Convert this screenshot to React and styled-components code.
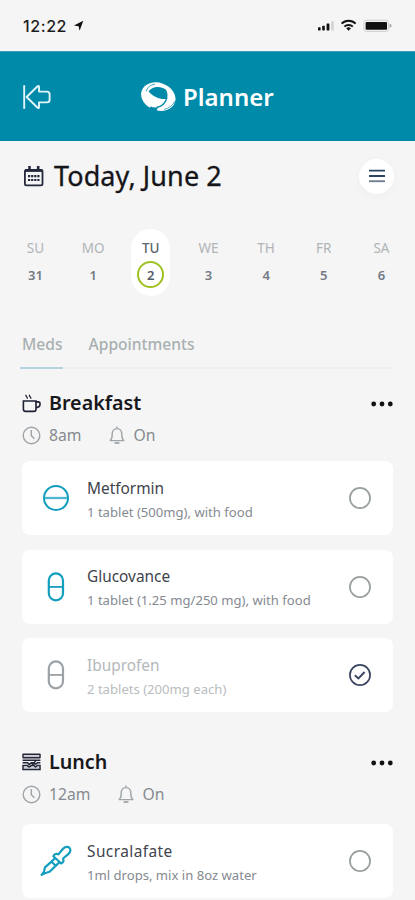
import React from 'react'
import styled, { createGlobalStyle } from 'styled-components'

const week = [
  { day: 'SU', date: '31' },
  { day: 'MO', date: '1' },
  { day: 'TU', date: '2', active: true },
  { day: 'WE', date: '3' },
  { day: 'TH', date: '4' },
  { day: 'FR', date: '5' },
  { day: 'SA', date: '6' },
]

const meals = [
  {
    name: 'Breakfast',
    icon: <CupIcon />,
    time: '8am',
    meds: [
      { name: 'Metformin', dose: '1 tablet (500mg), with food', icon: <TabletIcon /> },
      { name: 'Glucovance', dose: '1 tablet (1.25 mg/250 mg), with food', icon: <CapsuleIcon /> },
      { name: 'Ibuprofen', dose: '2 tablets (200mg each)', icon: <CapsuleIcon />, done: true },
    ],
  },
  {
    name: 'Lunch',
    icon: <SandwichIcon />,
    time: '12am',
    meds: [
      { name: 'Sucralafate', dose: '1ml drops, mix in 8oz water', icon: <DropperIcon />, wide: true },
    ],
  },
]

function App() {
  return (
    <Screen>
      <GlobalStyle />
      <StatusBar>
        <Clock>12:22</Clock>
        <LocationIcon />
        <StatusIcons />
      </StatusBar>

      <Header>
        <BackIcon />
        <Brand>
          <Logo />
          <h1>Planner</h1>
        </Brand>
      </Header>

      <TitleRow>
        <CalendarIcon />
        <h2>Today, June 2</h2>
        <MenuButton aria-label="Menu">
          <svg width="16" height="14" viewBox="0 0 16 14" fill="none" strokeWidth="1.9">
            <path d="M0 1.6h16M0 7h16" stroke="#2b4560" />
            <path d="M0 12.2h16" stroke="#717f90" />
          </svg>
        </MenuButton>
      </TitleRow>

      <Week>
        {week.map((d) => (
          <Day key={d.day} $active={d.active}>
            <DayName $active={d.active}>{d.day}</DayName>
            <DayDate $active={d.active}>{d.date}</DayDate>
          </Day>
        ))}
      </Week>

      <Tabs>
        <Tab $active>Meds</Tab>
        <Tab>Appointments</Tab>
      </Tabs>

      {meals.map((meal) => (
        <Meal key={meal.name}>
          <MealHead>
            {meal.icon}
            <MealName>{meal.name}</MealName>
            <MoreIcon />
          </MealHead>
          <Meta>
            <ClockIcon />
            <span>{meal.time}</span>
            <BellIcon />
            <span>On</span>
          </Meta>
          <Cards>
            {meal.meds.map((med) => (
              <Card key={med.name}>
                <MedIcon $done={med.done}>{med.icon}</MedIcon>
                <MedText>
                  <MedName $done={med.done} $wide={med.wide}>{med.name}</MedName>
                  <Dose $done={med.done}>{med.dose}</Dose>
                </MedText>
                <CheckIcon done={med.done} />
              </Card>
            ))}
          </Cards>
        </Meal>
      ))}
    </Screen>
  )
}
export default App

function LocationIcon() {
  return (
    <svg width="11" height="12" viewBox="0 0 11 12" fill="#111">
      <path d="M10.3.8 6.6 10.8 5.6 6.3.9 5.4z" />
    </svg>
  )
}

function StatusIcons() {
  return (
    <RightSvg width="78" height="16" viewBox="0 0 78 16" fill="#111">
      <rect x="1" y="9.2" width="2.6" height="3.2" rx=".6" />
      <rect x="5.2" y="7.8" width="2.6" height="4.6" rx=".6" />
      <rect x="9.6" y="5.4" width="2.8" height="7" rx=".6" />
      <rect x="14.2" y="3.2" width="2.6" height="9.2" rx=".6" fill="#d2d2d2" />
      <g fill="none" stroke="#111" strokeWidth="2">
        <path d="M24.6 5.6a10 10 0 0 1 14 0" />
        <path d="M27.4 8.6a6 6 0 0 1 8.4 0" />
      </g>
      <path d="M29.2 10.3a3.6 3.6 0 0 1 4.8 0l-2.4 2.5z" />
      <rect x="46.8" y="2.2" width="24.6" height="11.2" rx="2.6" fill="none" stroke="#cfcfcf" />
      <rect x="48.6" y="4" width="21.4" height="7.8" rx="1" />
      <path d="M72.6 5.6q2 1 2 2.2t-2 2.2z" fill="#a5a5a5" />
    </RightSvg>
  )
}

function BackIcon() {
  return (
    <svg width="30" height="26" viewBox="0 0 30 26" fill="none" stroke="#e2f5fa" strokeWidth="1.9" strokeLinejoin="round">
      <path d="M2.2 1.2v23.6" />
      <path d="M4.6 13 15.6 2.2q1.4-1 1.4.8v4.6h8q2.6 0 2.6 2.6v5.6q0 2.6-2.6 2.6h-8V23q0 1.8-1.4.8z" />
    </svg>
  )
}

function Logo() {
  return (
    <svg width="36" height="32" viewBox="0 0 36 32" fill="none">
      <ellipse cx="18.3" cy="15.6" rx="17.6" ry="13.8" transform="rotate(20 18.3 15.6)" fill="#fff" />
      <path d="M8.6 10.5C11 6 20 3.8 25.8 8.6c1.8 2.6 2.2 6 1.2 9.2-6.5 1-13.5-1.500-18.400-7.300z" fill="#008aa9" />
      <path d="M6.500 10.300C7 6.500 10.500 3.600 15 3.300" stroke="#008aa9" strokeWidth=".8" />
      <path d="M27 16.500c-1.400 5-5.200 9-10.500 10" stroke="#008aa9" strokeWidth="1.300" />
      <path d="M10.500 25.500c2.600 1.200 5 1.200 7.500.7l-2 4.800H8z" fill="#008aa9" />
      <path d="M35 20c-2.200 4.400-5.600 7.200-11 8.400" stroke="#008aa9" strokeWidth=".7" />
    </svg>
  )
}

function CalendarIcon() {
  return (
    <svg width="20" height="21" viewBox="0 0 20 21" fill="none" stroke="#23283c">
      <rect x=".9" y="3.8" width="17.6" height="15.6" rx="1.6" strokeWidth="1.8" />
      <path d="M1 4.6h17.4" strokeWidth="2.6" />
      <path d="M5.5 0v4.5M14.2 0v4.5" strokeWidth="2.6" />
      <g strokeWidth="2.2" strokeDasharray="2.2 .9">
        <path d="M4 10.1h11.8M4 14h11.8" />
      </g>
    </svg>
  )
}

function CupIcon() {
  return (
    <svg width="19" height="19" viewBox="0 0 19 19" fill="none" stroke="#1d2033" strokeWidth="1.6">
      <path d="M.6 7h13.4v8q0 2.4-2.2 2.4H3.6q-2.2 0-2.2-2.4V7" />
      <path d="M13.6 7.9h2.6q1.8 0 1.8 1.9v.6q0 2.6-4 3.2" />
      <path d="M4 .8q-.4 1.2.6 2t.6 2M7.5.8q-.4 1.2.6 2t.6 2" strokeWidth="1.3" />
    </svg>
  )
}

function SandwichIcon() {
  return (
    <svg width="19" height="19" viewBox="0 0 19 19" fill="none" stroke="#23263a" strokeWidth="1.5">
      <rect x="1" y="1.2" width="17" height="3.6" rx=".4" />
      <path d="M.6 7.2h17.8M.6 9.8h5l1.6 1.6 2.2-1.6h2.2l1.8 1.5 2.2-1.5h2.8" />
      <path d="m9 9.6 2 1.8 3-4" />
      <path d="M1 16.6v-4h4.5L7 14l2.5-1.4H12l1.5 1.4 1.8-1.4H18v4z" />
      <path d="M2 3.1h15M2 15h15" stroke="#8a8c98" strokeWidth=".8" />
    </svg>
  )
}

function MoreIcon() {
  return (
    <RightSvg width="22" height="6" viewBox="0 0 22 6" fill="#111">
      <circle cx="2.7" cy="3" r="2.4" />
      <circle cx="11" cy="3" r="2.4" />
      <circle cx="19.3" cy="3" r="2.4" />
    </RightSvg>
  )
}

function ClockIcon() {
  return (
    <svg width="19" height="19" viewBox="0 0 19 19" fill="none" stroke="#9fa5a9" strokeWidth="1.4">
      <circle cx="9.5" cy="9.5" r="8.3" />
      <path d="M9.3 4v5.6l3.2 3.2" />
    </svg>
  )
}

function BellIcon() {
  return (
    <svg width="16" height="19" viewBox="0 0 16 19" fill="none" stroke="#9fa5a9" strokeWidth="1.4">
      <path d="M8 .6v2M1.2 14.6c1.8-1.6 2-3 2-6.2 0-3.6 2-5.8 4.8-5.8s4.8 2.2 4.8 5.8c0 3.2.2 4.6 2 6.2z" strokeLinejoin="round" />
      <path d="M5.6 17h4.8" strokeWidth="1.8" />
    </svg>
  )
}

function TabletIcon() {
  return (
    <svg width="28" height="28" viewBox="0 0 28 28" fill="none" stroke="currentColor" strokeWidth="2">
      <circle cx="14" cy="14" r="12" />
      <path d="M2 14h24" strokeWidth="2.3" opacity=".75" />
    </svg>
  )
}

function CapsuleIcon() {
  return (
    <svg width="18" height="30" viewBox="0 0 18 30" fill="none" stroke="currentColor" strokeWidth="2.2">
      <rect x="1.8" y="1.4" width="14.2" height="27" rx="7.1" />
      <path d="M1.8 14.9H16" strokeWidth="1.8" />
    </svg>
  )
}

function DropperIcon() {
  return (
    <svg width="32" height="32" viewBox="0 0 32 32" fill="none" stroke="currentColor" strokeWidth="2.2" strokeLinejoin="round">
      <path d="M13.4 11.2c1-2.2 3-3 5-1.8l4.6-5.6c2-2.3 4.9-2.4 6.4-1s1.3 4-.8 6l-5.6 4.7c1.2 2 .4 4-1.8 5z" />
      <path d="M15.4 13 5 22.4 4 26.6l-2.4 3.2L5.6 28l4-1.2L20 16.6" />
      <path d="m11.4 16.8 4.4 4" />
    </svg>
  )
}

function CheckIcon({ done }) {
  return (
    <svg width="24" height="24" viewBox="0 0 24 24" fill="none" stroke={done ? '#3b4560' : '#999e9f'} strokeWidth="1.7">
      <circle cx="12" cy="12" r="10.1" />
      {done && <path d="m6.8 12.2 3.6 3.2 6.2-6.4" strokeWidth="1.9" />}
    </svg>
  )
}

const GlobalStyle = createGlobalStyle`
  * {
    box-sizing: border-box;
  }
  body {
    margin: 0;
    background: #f5f5f5;
    font-family: "Noto Sans", "Open Sans", sans-serif;
  }
  h1, h2, h3, p {
    margin: 0;
  }
  svg {
    display: block;
    flex-shrink: 0;
  }
`

const Screen = styled.div`
  width: 415px;
  height: 900px;
  overflow: hidden;
  background: #f5f5f5;
`

const RightSvg = styled.svg`
  margin-left: auto;
`

const StatusBar = styled.div`
  display: flex;
  align-items: center;
  height: 51px;
  padding: 0 20px 0 23px;
`

const Clock = styled.span`
  width: 50px;
  font-family: Inter, sans-serif;
  font-size: 16px;
  font-weight: 500;
  letter-spacing: 0.6px;
  color: #1c1c1c;
`

const Header = styled.header`
  display: flex;
  align-items: center;
  height: 90px;
  padding: 0 22px;
  background: #008aa9;
  border-top: 1px solid #3c9cb5;
`

const Brand = styled.div`
  display: flex;
  align-items: center;
  gap: 7px;
  margin-left: 88px;

  h1 {
    font-size: 24px;
    font-weight: 600;
    line-height: 32px;
    color: #fff;
  }
`

const TitleRow = styled.div`
  display: flex;
  align-items: center;
  height: 70px;
  padding: 0 21px 0 24px;

  h2 {
    margin-left: 10px;
    font-size: 27px;
    font-weight: 400;
    line-height: 36px;
    letter-spacing: 0.1px;
    color: #151519;
    -webkit-text-stroke: 0.3px #151519;
  }
`

const MenuButton = styled.button`
  display: flex;
  align-items: center;
  justify-content: center;
  width: 35px;
  height: 35px;
  margin-left: auto;
  padding: 0;
  border: 0;
  border-radius: 50%;
  background: #fff;
  box-shadow: 0 2px 8px rgba(0, 0, 0, 0.03);
`

const Week = styled.div`
  display: flex;
  justify-content: space-between;
  margin-top: 18px;
  padding: 0 14px 0 16px;
`

const Day = styled.div`
  display: flex;
  flex-direction: column;
  align-items: center;
  width: 39px;
  height: 67px;
  padding-top: 9px;
  border-radius: 20px;
  background: ${props => props.$active ? '#fff' : 'transparent'};
`

const DayName = styled.span`
  font-size: 13.5px;
  font-weight: ${props => props.$active ? 500 : 400};
  line-height: 20px;
  color: ${props => props.$active ? '#60656b' : '#b0b4b5'};
`

const DayDate = styled.span`
  display: flex;
  align-items: center;
  justify-content: center;
  width: 27px;
  height: 27px;
  margin-top: 3px;
  border: 2px solid ${props => props.$active ? '#9fc021' : 'transparent'};
  border-radius: 50%;
  font-size: 13px;
  font-weight: 600;
  color: ${props => props.$active ? '#545966' : '#747a84'};
`

const Tabs = styled.div`
  display: flex;
  gap: 20px;
  height: 44px;
  margin: 29px 22px 0 20px;
  box-shadow: inset 0 -2px #eeefef;
`

const Tab = styled.div`
  padding: ${props => props.$active ? '7px 0 0 2px' : '7px 0 0 6px'};
  border-bottom: 2px solid ${props => props.$active ? '#b5d3df' : 'transparent'};
  font-size: 15.6px;
  font-weight: 500;
  line-height: 24px;
  color: #a8b0b1;
`

const Meal = styled.section`
  padding: 18px 22px 0;

  & + & {
    padding-top: 34px;
  }
`

const MealHead = styled.div`
  display: flex;
  align-items: center;
  height: 32px;

  ${RightSvg} {
    margin-top: 2px;
  }
`

const MealName = styled.h3`
  margin-left: 8px;
  font-size: 19.7px;
  font-weight: 600;
  line-height: 32px;
  color: #18181c;
`

const Meta = styled.div`
  display: flex;
  align-items: center;
  height: 32px;
  font-size: 15.7px;
  line-height: 24px;
  color: #858b90;

  span {
    margin-left: 8px;
  }
  span + svg {
    margin-left: 28px;
  }
`

const Cards = styled.div`
  display: flex;
  flex-direction: column;
  gap: 14.5px;
  margin-top: 10px;

  ${Meal} + ${Meal} & {
    margin-top: 14px;
  }
`

const Card = styled.div`
  display: flex;
  align-items: center;
  height: 74px;
  padding-right: 21px;
  border-radius: 8px;
  background: #fff;
`

const MedIcon = styled.div`
  display: flex;
  justify-content: center;
  width: 65px;
  padding-left: 3px;
  color: ${props => props.$done ? '#9ba1a7' : '#139dbe'};
`

const MedText = styled.div`
  flex: 1;
  padding-top: 4px;
  white-space: nowrap;
`

const MedName = styled.p`
  font-size: 15.4px;
  line-height: 24px;
  letter-spacing: ${props => props.$wide ? '0.45px' : 'normal'};
  color: ${props => props.$done ? '#b3b7ba' : '#40434c'};
`

const Dose = styled.p`
  font-size: 13.1px;
  line-height: 23px;
  color: ${props => props.$done ? '#b9bdc0' : '#858a91'};
`
